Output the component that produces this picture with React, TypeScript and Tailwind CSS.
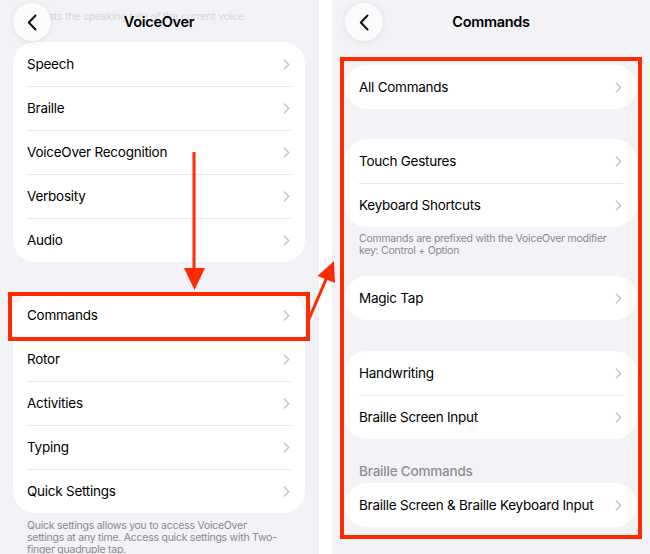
import React from 'react';

// Two iOS settings screens side by side with red annotation arrows.

const Chevron = () => (
  <svg width="7" height="11" viewBox="0 0 7 11" fill="none" className="shrink-0">
    <path d="M1.2 1l4.5 4.5-4.5 4.5" stroke="#c4c4c8" strokeWidth="1.4" strokeLinecap="round" strokeLinejoin="round" />
  </svg>
);

const BackButton = () => (
  <div className="w-[38px] h-[38px] shrink-0 rounded-full bg-[#fbfbfc] shadow-[0_1px_6px_rgba(0,0,0,0.08)] flex items-center justify-center">
    <svg width="10" height="17" viewBox="0 0 10 17" fill="none">
      <path d="M8.5 1.5L1.8 8.5l6.7 7" stroke="#111" strokeWidth="2" strokeLinecap="round" strokeLinejoin="round" />
    </svg>
  </div>
);

function NavBar({ title }: { title: string }) {
  return (
    <div className="h-[42px] shrink-0 flex items-start pt-[3px]">
      <BackButton />
      <div className="flex-1 h-[38px] flex items-center justify-center text-[14.5px] tracking-[-0.3px] font-semibold text-black">
        {title}
      </div>
      <div className="w-[38px]" />
    </div>
  );
}

function Card({ items }: { items: string[] }) {
  return (
    <div className="bg-white rounded-[22px] overflow-hidden shrink-0">
      {items.map((label, i) => (
        <div key={label}>
          {i > 0 && <div className="h-px bg-[#e6e6ea] mx-[14px]" />}
          <div className={`${i === 0 ? 'h-[44px]' : 'h-[43px]'} flex items-center justify-between pl-[14px] pr-[15px]`}>
            <span className="text-[13.5px] tracking-[-0.25px] text-black">{label}</span>
            <Chevron />
          </div>
        </div>
      ))}
    </div>
  );
}

export default function App() {
  return (
    <div
      className="relative w-[650px] h-[554px] bg-white flex overflow-hidden"
      style={{ fontFamily: 'Inter, "Noto Sans", sans-serif' }}
    >
      {/* Left screen: VoiceOver */}
      <div className="w-[319px] h-full bg-[#f2f2f7] flex flex-col pl-[13px] pr-[14px] overflow-hidden">
        <div className="relative shrink-0">
          <div className="absolute left-[14px] top-[9px] text-[10.5px] tracking-[-0.2px] text-[#d8d8dc] whitespace-nowrap">
            Adjusts the speaking rate of the current voice.
          </div>
          <div className="relative">
            <NavBar title="VoiceOver" />
          </div>
        </div>
        <Card items={['Speech', 'Braille', 'VoiceOver Recognition', 'Verbosity', 'Audio']} />
        <div className="relative mt-[31px] shrink-0">
          <Card items={['Commands', 'Rotor', 'Activities', 'Typing', 'Quick Settings']} />
          <div className="absolute -left-[5px] -right-[5px] -top-[1px] h-[49px] border-[4px] border-[#ff2a00]" />
        </div>
        <p className="mt-[7px] px-[14px] shrink-0 whitespace-nowrap text-[10.5px] tracking-[-0.25px] leading-[12px] text-[#8a8a8e]">
          Quick settings allows you to access VoiceOver
          <br />
          settings at any time. Access quick settings with Two-
          <br />
          finger quadruple tap.
        </p>
      </div>

      <div className="w-[13px] shrink-0 bg-white" />

      {/* Right screen: Commands */}
      <div className="relative flex-1 h-full bg-[#f2f2f7] flex flex-col px-[13px] overflow-hidden">
        <NavBar title="Commands" />
        <div className="mt-[23px]">
          <Card items={['All Commands']} />
        </div>
        <div className="mt-[30px]">
          <Card items={['Touch Gestures', 'Keyboard Shortcuts']} />
        </div>
        <p className="mt-[6px] px-[14px] text-[10.5px] tracking-[-0.25px] leading-[12px] text-[#8a8a8e]">
          Commands are prefixed with the VoiceOver modifier key: Control + Option
        </p>
        <div className="mt-[19px]">
          <Card items={['Magic Tap']} />
        </div>
        <div className="mt-[31px]">
          <Card items={['Handwriting', 'Braille Screen Input']} />
        </div>
        <div className="mt-[24px] px-[14px] text-[13.5px] tracking-[-0.2px] leading-[17px] font-medium text-[#8e8e93]">
          Braille Commands
        </div>
        <div className="mt-[3px]">
          <Card items={['Braille Screen & Braille Keyboard Input']} />
        </div>
        <div className="absolute left-[8px] right-[8px] top-[57px] h-[482px] border-[4px] border-[#ff2a00]" />
      </div>

      {/* Annotation arrows */}
      <svg className="absolute inset-0 pointer-events-none" width="650" height="554" viewBox="0 0 650 554">
        <line x1="194" y1="152" x2="194" y2="272" stroke="#ff2a00" strokeWidth="3" />
        <polygon points="184,268 205,268 194.5,290" fill="#ff2a00" />
        <line x1="309" y1="319" x2="327" y2="277" stroke="#ff2a00" strokeWidth="3" />
        <polygon points="334,261 335,283 317.5,276" fill="#ff2a00" />
      </svg>
    </div>
  );
}
